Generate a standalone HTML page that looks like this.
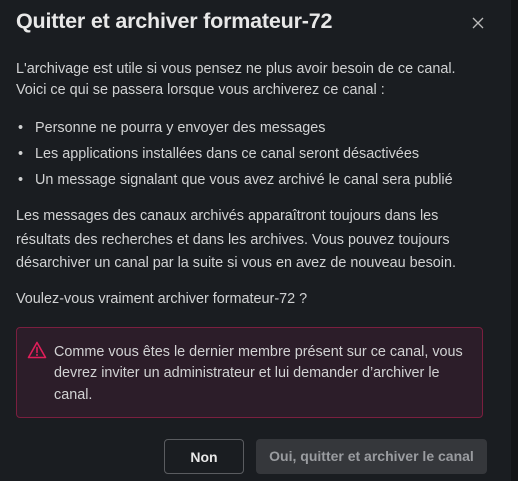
<!DOCTYPE html>
<html><head><meta charset="utf-8"><style>
html,body{margin:0;padding:0;}
body{width:518px;height:481px;background:#1a1d21;overflow:hidden;position:relative;font-family:"Liberation Sans",sans-serif;color:#d1d2d3;}
.strip{position:absolute;left:511px;top:0;width:7px;height:481px;background:#121416;}
.t{position:absolute;left:0;white-space:nowrap;font-size:14.4px;}
h1{position:absolute;left:16px;top:9px;margin:0;font-size:21.5px;font-weight:bold;color:#e8e8e8;letter-spacing:-0.2px;}
.alert{position:absolute;left:16px;top:327px;width:467px;height:91px;background:#2c1d29;border:1px solid #7a1f3f;border-radius:4px;box-sizing:border-box;}
.btn{position:absolute;top:439px;height:35px;border-radius:4px;box-sizing:border-box;font-weight:bold;font-size:14px;line-height:35px;text-align:center;}
</style></head><body>
<div class="strip"></div>
<h1>Quitter et archiver formateur-72</h1>
<svg style="position:absolute;left:472px;top:17px" width="12" height="12" viewBox="0 0 12 12"><path d="M1 1L11 11M11 1L1 11" stroke="#bbb" stroke-width="1.3"/></svg>
<div class="t" style="left:16px;top:61px">L'archivage est utile si vous pensez ne plus avoir besoin de ce canal.</div>
<div class="t" style="left:16px;top:82px">Voici ce qui se passera lorsque vous archiverez ce canal :</div>
<div class="t" style="left:18px;top:120px">•&nbsp;&nbsp;&nbsp;Personne ne pourra y envoyer des messages</div>
<div class="t" style="left:18px;top:146px">•&nbsp;&nbsp;&nbsp;Les applications installées dans ce canal seront désactivées</div>
<div class="t" style="left:18px;top:172px">•&nbsp;&nbsp;&nbsp;Un message signalant que vous avez archivé le canal sera publié</div>
<div class="t" style="left:16px;top:208px">Les messages des canaux archivés apparaîtront toujours dans les</div>
<div class="t" style="left:16px;top:232px">résultats des recherches et dans les archives. Vous pouvez toujours</div>
<div class="t" style="left:16px;top:255px">désarchiver un canal par la suite si vous en avez de nouveau besoin.</div>
<div class="t" style="left:16px;top:291px">Voulez-vous vraiment archiver formateur-72 ?</div>
<div class="alert"></div>
<svg style="position:absolute;left:27px;top:341px" width="20" height="18" viewBox="0 0 20 18"><path d="M10 1.5L1.5 16.5h17z" fill="none" stroke="#e01e5a" stroke-width="1.6" stroke-linejoin="round"/><path d="M10 6.5v5" stroke="#e01e5a" stroke-width="1.6" stroke-linecap="round"/><circle cx="10" cy="14" r="1" fill="#e01e5a"/></svg>
<div class="t" style="left:54px;top:344px">Comme vous êtes le dernier membre présent sur ce canal, vous</div>
<div class="t" style="left:54px;top:365px">devrez inviter un administrateur et lui demander d’archiver le</div>
<div class="t" style="left:54px;top:387px">canal.</div>
<div class="btn" style="left:164px;width:80px;border:1px solid #5a5c60;color:#e8e8e8;">Non</div>
<div class="btn" style="left:256px;width:231px;background:#35373b;color:#9a9ca0;">Oui, quitter et archiver le canal</div>
</body></html>
